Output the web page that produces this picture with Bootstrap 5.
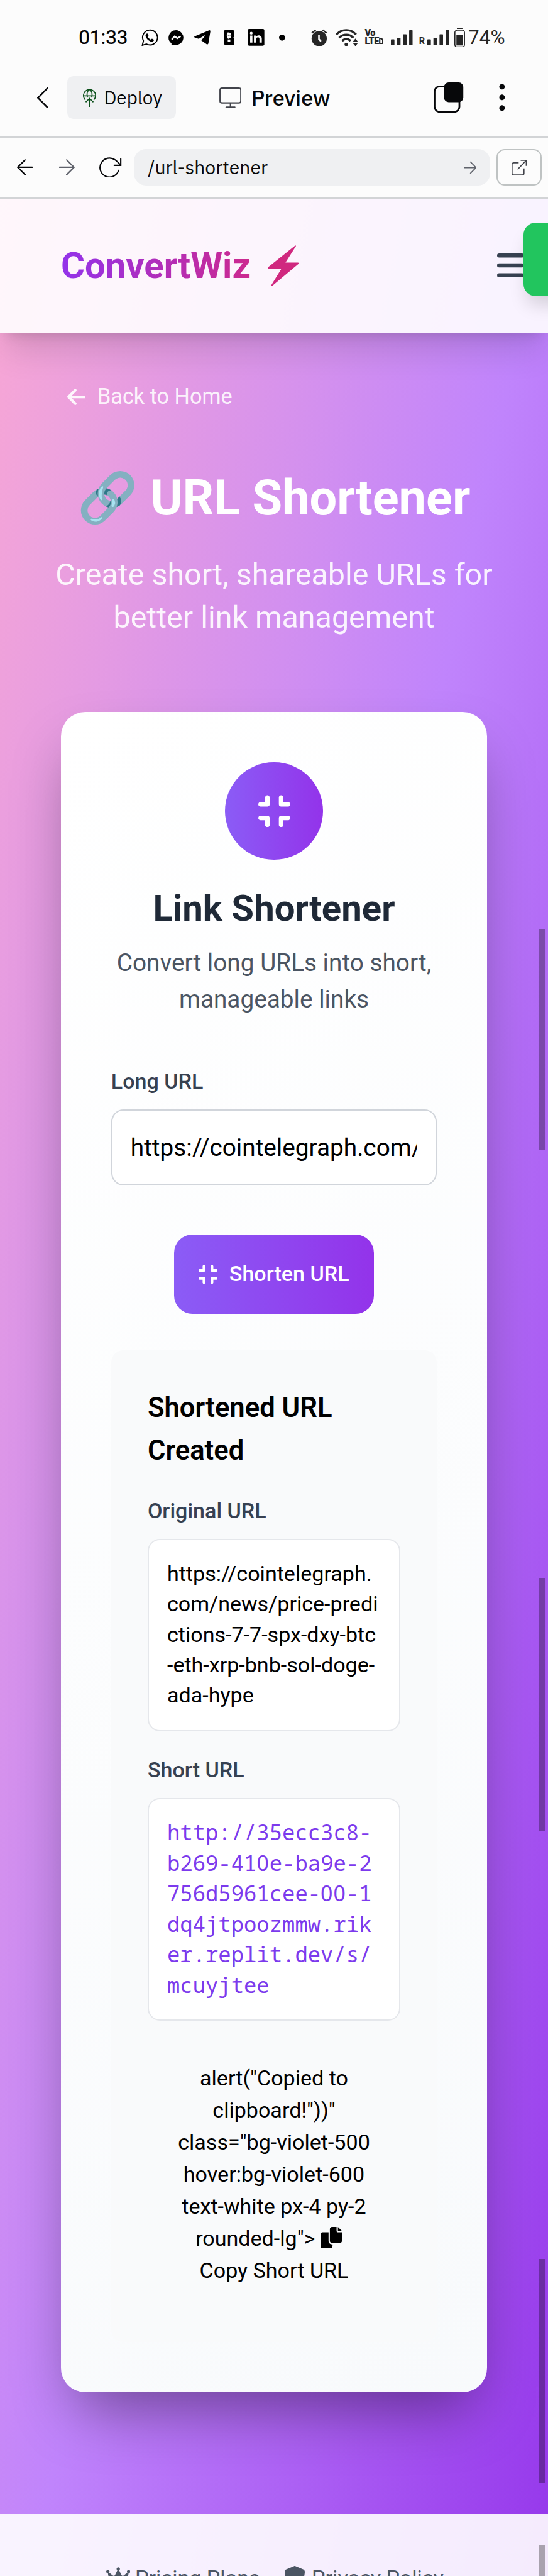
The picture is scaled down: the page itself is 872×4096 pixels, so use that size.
<!DOCTYPE html>
<html lang="en">
<head>
<meta charset="utf-8">
<meta name="viewport" content="width=device-width, initial-scale=1">
<title>ConvertWiz - URL Shortener</title>
<link rel="stylesheet" href="https://cdn.jsdelivr.net/npm/bootstrap@5.3.0/dist/css/bootstrap.min.css">
<style>
html{font-size:8.075px;overflow:hidden}
body{font-family:Roboto,sans-serif;font-size:4.22rem;line-height:6rem;color:#000;background:#fcfcfc;margin:0}
h1,h2,h3,p{margin:0}
svg{display:block;flex:none}
.screen{position:relative;width:100%;height:4096px;overflow:hidden}
/* phone status bar */
.statusbar{height:11.6rem;padding:3.2rem 0 0 15.5rem;font-size:3.9rem;font-weight:400;line-height:8.4rem}
.statusbar .right{color:#262626;font-weight:400;margin-left:5.1rem}
/* browser chrome */
.chrome{font-family:"IBM Plex Sans","Noto Sans",sans-serif;color:#07080a}
.toolbar{height:15.5rem;border-bottom:.3rem solid #d2d4d6;padding-left:7.3rem}
.deploy{width:21.5rem;height:8.4rem;margin-left:3.7rem;padding-left:3.2rem;border-radius:1.2rem;background:#eff0f2;font-size:3.67rem}
.previewtab{margin-left:8.5rem;font-size:4.25rem;font-weight:500}
.addressbar{height:12rem;border-bottom:.3rem solid #d2d4d6;padding:0 1.2rem 0 3.3rem}
.addr{height:7.2rem;margin-left:2.4rem;margin-right:1.2rem;padding:0 2.7rem;border-radius:2.4rem;background:#eff0f2;font-size:3.73rem}
.extbtn{width:9rem;height:7.2rem;border:.3rem solid #bfc3c3;border-radius:1.6rem}
/* site */
.site{background:linear-gradient(to bottom right,#f9a8d4,#c084fc,#9333ea) 0 0/100% 496.6rem no-repeat;height:468.3rem}
.sitehead{position:relative;height:26.4rem;padding:0 4.7rem 0 12rem;background:rgba(255,255,255,.9);box-shadow:0 4.8rem 6rem -1.2rem rgba(0,0,0,.12),0 1.9rem 2.4rem -1.4rem rgba(0,0,0,.14)}
.brand{font-size:7.2rem;font-weight:700;line-height:9.6rem;gap:3.4rem;background:linear-gradient(90deg,#9333ea,#db2777);-webkit-background-clip:text;background-clip:text;color:transparent}
.toastbox{position:absolute;right:-20rem;top:4.8rem;width:24.8rem;height:14.4rem;border-radius:2.4rem;background:#22c55e;box-shadow:0 2.4rem 3.6rem -.7rem rgba(0,0,0,.15)}
.hero{padding:9.6rem 4rem 0}
.backlink{margin-left:9.2rem;gap:2.3rem;font-size:4.24rem;line-height:6rem;color:rgba(255,255,255,.9);text-decoration:none}
.hero h1{height:12rem;margin-top:11rem;font-size:9.6rem;font-weight:700;line-height:12rem;color:#fff;white-space:nowrap}
.emoji{font-family:"Noto Color Emoji",sans-serif;font-weight:400}
.tagline{margin-top:4.85rem;font-size:6rem;line-height:8.4rem;color:rgba(255,255,255,.9);white-space:nowrap}
.panel{width:84rem;height:330.9rem;margin:14.45rem auto 0;padding:9.9rem;border-radius:4.8rem;background:linear-gradient(145deg,#fff,#f8fafc);box-shadow:0 6rem 12rem -2.9rem rgba(0,0,0,.4)}
.disc{width:19.2rem;height:19.2rem;background:linear-gradient(90deg,#8b5cf6,#9333ea);color:#fff}
.panel h2{margin-top:5.05rem;font-size:7.2rem;font-weight:700;line-height:9rem;color:#1f2937}
.panel .sub{margin-top:2.65rem;font-size:4.8rem;line-height:7.2rem;color:#4b5563;white-space:nowrap}
.flabel{display:block;font-weight:500;line-height:6rem;color:#374151}
.form-control.longurl{height:15rem;margin-top:2.6rem;padding:0 3.6rem;border:.3rem solid #d1d5db;border-radius:2.4rem;font-size:4.8rem;color:#000;background:#fff;text-overflow:clip}
.btn.shorten{width:39.4rem;height:15.6rem;margin-top:9.6rem;padding:0;border:0;border-radius:3.6rem;background:linear-gradient(90deg,#8b5cf6,#9333ea);font-size:4.22rem;font-weight:500;color:#fff;gap:2.3rem}
.result{height:195.3rem;margin-top:7.15rem;padding:7.25rem 7.2rem 0;border-radius:2.4rem;background:#f9fafb}
.result h3{font-size:5.4rem;font-weight:600;line-height:8.4rem}
.urlbox{margin-top:2.6rem;padding:3.5rem 3.6rem;border:.3rem solid #e5e7eb;border-radius:2.4rem;background:#fff;white-space:nowrap}
.long{height:37.8rem}
.shorturl{height:43.8rem;padding-top:3.5rem;font-family:"Noto Sans Mono","DejaVu Sans Mono",monospace;font-size:4.2rem;color:#7c3aed}
.zero{font-family:"Noto Sans",sans-serif;letter-spacing:.029em}
.copy{margin-top:8.2rem;line-height:6.32rem;white-space:nowrap}
.copy svg{display:inline-block;vertical-align:-.5rem;margin-right:2.1rem}
.sitefoot{height:12.1rem;margin-top:24rem;padding:9.3rem 0 0 .3rem;background:rgba(255,255,255,.9);color:#4b5563;gap:4.8rem}
/* overlay scrollbar thumbs */
.thumb{position:absolute;right:.6rem;width:1.2rem;background:rgba(0,0,0,.31)}
</style>
<script src="https://cdn.jsdelivr.net/npm/bootstrap@5.3.0/dist/js/bootstrap.bundle.min.js"></script>
</head>
<body>
<svg width="0" height="0" class="position-absolute"><defs>
<symbol id="compress" viewBox="0 32 448 448"><path fill="currentColor" d="M160 64c0-17.700-14.300-32-32-32s-32 14.300-32 32v64H32c-17.700 0-32 14.300-32 32s14.300 32 32 32h96c17.700 0 32-14.300 32-32V64zM32 320c-17.700 0-32 14.300-32 32s14.300 32 32 32h64v64c0 17.700 14.300 32 32 32s32-14.300 32-32v-96c0-17.700-14.300-32-32-32H32zM352 64c0-17.700-14.300-32-32-32s-32 14.300-32 32v96c0 17.700 14.300 32 32 32h96c17.700 0 32-14.300 32-32s-14.300-32-32-32h-64V64zM320 320c-17.700 0-32 14.300-32 32v96c0 17.700 14.300 32 32 32s32-14.300 32-32v-64h64c17.700 0 32-14.300 32-32s-14.300-32-32-32h-96z"/></symbol>
<symbol id="bars" viewBox="0 0 43 30"><path fill="currentColor" d="M0 19q0-1 1-1h5q1 0 1 1v10q0 1-1 1H1q-1 0-1-1zM12 16q0-1 1-1h5q1 0 1 1v13q0 1-1 1h-5q-1 0-1-1zM24 9q0-1 1-1h5q1 0 1 1v20q0 1-1 1h-5q-1 0-1-1zM36 1q0-1 1-1h5q1 0 1 1v28q0 1-1 1h-5q-1 0-1-1z"/></symbol>
</defs></svg>
<div class="screen">

<div class="statusbar d-flex align-items-center">
  <span style="width:12.4rem;-webkit-text-stroke:.03rem">01:33</span>
  <svg style="width:3.3rem;height:3.4rem" viewBox="0 0 33 34"><path d="M2 32l2-8.500a14.700 14.700 0 1 1 6 6.200z" fill="none" stroke="#000" stroke-width="2.400"/><path d="M9.500 10c2-2 3.500-1 4.500 3 .2 1-1 1.600-1.300 2.400 1.300 2.700 3.300 4.600 6 5.700 1-.6 1.600-2.300 2.800-1.700 4 1.700 4 2.200 2.500 4.200-3 3.500-9 .6-12.500-3.400-3.300-3.700-4.600-7.600-2-10.200z"/></svg>
  <svg style="width:3rem;height:3rem;margin-left:2rem" viewBox="0 0 30 30"><path d="M15 0a15 14.600 0 1 1-4 28.800L6 30v-4A15 14.600 0 0 1 15 0z"/><path d="M6.500 18.500l6-6.500 5 4 6.500-4" fill="none" stroke="#fcfcfc" stroke-width="3"/></svg>
  <svg style="width:3.2rem;height:2.8rem;margin-left:2.1rem" viewBox="0 0 32 28"><path d="M1 12L30 0q2 0 2 2l-4 24q-1 3-3.500 1.500L14 20l9-11L9 17l-8-2.500q-2-1.500 0-2.500z"/></svg>
  <svg style="width:2.1rem;height:3.1rem;margin-left:2.6rem" viewBox="0 0 21 31"><path d="M5 0h11q5 1 5 6v5q0 3-2 5 2 2 2 5v5q0 5-5 5H5q-5-1-5-6V6q0-5 5-6z"/><path d="M10.500 6q4.500 0 4.500 5.500T10.500 18 6 11.500 10.500 6zM8 19.500h5v5H8z" fill="#fcfcfc"/><circle cx="9" cy="11" r=".8"/><circle cx="12.500" cy="11" r=".8"/></svg>
  <svg style="width:3.3rem;height:3.3rem;margin-left:2.6rem" viewBox="0 0 33 33"><rect width="33" height="33" rx="3"/><path d="M5 13h4.500v14H5zM12.500 13H17v2c3-4 11-3 11 4v8h-4.700v-7.500c0-4-6-4-6 0V27h-4.800z" fill="#fcfcfc"/><circle cx="7.200" cy="8.300" r="2.700" fill="#fcfcfc"/></svg>
  <svg style="width:1.2rem;height:1.2rem;margin-left:2.9rem" viewBox="0 0 12 12"><circle cx="6" cy="6" r="6"/></svg>
  <div class="right d-flex align-items-center">
    <svg style="width:3.2rem;height:3.4rem" viewBox="0 0 32 34" fill="#262626"><circle cx="16" cy="19" r="15"/><path d="M1.500 8L9 2M30.500 8L23 2" stroke="#262626" stroke-width="3"/><path d="M15.500 12v8l4 4.500" stroke="#fcfcfc" stroke-width="3.200" fill="none"/></svg>
    <svg style="width:4.5rem;height:3.4rem;margin-left:1.6rem" viewBox="0 0 45 34"><g fill="none" stroke="#262626" stroke-width="4.200"><path d="M1.500 11c11-11.500 28-11.500 39 0M7 17.500c8-8 20-8 28 0M13 23.500c5-5 11.500-5 16.500 0"/></g><circle cx="21" cy="30.500" r="3.300" fill="#262626"/><path d="M34 25l5-6 5 6zM34 28h10l-5 6z" fill="#262626"/></svg>
    <div style="width:3.5rem;margin-left:1.3rem;font-size:1.8rem;line-height:1.5rem;font-weight:900;letter-spacing:-.05rem" class="text-nowrap">Vo<br>LTE<svg class="d-inline-block" style="width:.9rem;height:1.3rem;vertical-align:0" viewBox="0 0 9 13"><path d="M1.500 1.500H5l2.500 2.500v7.500h-6z" fill="none" stroke="#262626" stroke-width="2.600"/></svg></div>
    <svg style="width:4.3rem;height:3rem;margin-left:1.7rem"><use href="#bars"/></svg>
    <span style="font-size:1.8rem;font-weight:700;line-height:2rem;width:1.6rem;margin-left:1.2rem;padding-top:1.6rem">R</span>
    <svg style="width:4.3rem;height:3rem"><use href="#bars"/></svg>
    <svg style="width:2.1rem;height:3.9rem;margin-left:1.1rem" viewBox="0 0 21 39"><path fill="#262626" d="M5 0h11v2.500H5zM4 15h13v20H4z"/><rect x="1" y="5" width="19" height="33" rx="4.500" fill="none" stroke="#262626" stroke-width="2"/></svg>
    <span style="margin-left:.6rem">74%</span>
  </div>
</div>

<div class="chrome">
  <nav class="toolbar d-flex align-items-center">
    <svg style="width:2.2rem;height:4.1rem" viewBox="0 0 22 41"><path d="M20.500 1.500L1.800 20.500 20.500 39.500" fill="none" stroke="#07080a" stroke-width="3.200" stroke-linecap="round"/></svg>
    <div class="deploy d-flex align-items-center"><svg style="width:2.6rem;height:3.6rem" viewBox="0 0 26 36"><path d="M4.500 22A12 12 0 1 1 21.500 22M1 14h24M9 17.500C7 10 9 4 13 1.500 17 4 19 10 17 17.500M13 36V19M5.500 26.500L13 19l7.500 7.500" fill="none" stroke="#0a4f19" stroke-width="2.100"/></svg><span style="margin-left:1.5rem">Deploy</span></div>
    <div class="previewtab d-flex align-items-center"><svg style="width:4.4rem;height:4.1rem" viewBox="0 0 44 41"><path d="M5 1.500h34q3.500 0 3.500 3.500v22q0 3.500-3.500 3.500H5q-3.500 0-3.500-3.500V5q0-3.500 3.500-3.500zM22 31v8M13.500 39h17" fill="none" stroke="#42444b" stroke-width="2.800" stroke-linecap="round"/></svg><span style="margin-left:1.9rem">Preview</span></div>
    <div class="ms-auto d-flex align-items-center" style="padding-right:8.4rem">
      <svg style="width:5.9rem;height:6rem" viewBox="0 0 59 60"><rect x="1.800" y="8" width="49" height="50" rx="10" fill="none" stroke="#07080a" stroke-width="3.500"/><rect x="20.500" y="0" width="38" height="39" rx="9" fill="#07080a"/></svg>
      <svg style="width:1.2rem;height:5.4rem;margin-left:7rem" viewBox="0 0 12 54" fill="#07080a"><circle cx="6" cy="6" r="5.500"/><circle cx="6" cy="27" r="5.500"/><circle cx="6" cy="48" r="5.500"/></svg>
    </div>
  </nav>
  <div class="addressbar d-flex align-items-center">
    <svg style="width:3.1rem;height:3.2rem" viewBox="0 0 31 32"><path d="M16 1.500L1.500 16 16 30.500M1.500 16H30" fill="none" stroke="#07080a" stroke-width="2.700" stroke-linecap="round"/></svg>
    <svg style="width:3.1rem;height:3.2rem;margin-left:5.3rem" viewBox="0 0 31 32"><path d="M15 1.500L29.500 16 15 30.500M29.500 16H1" fill="none" stroke="#5f626b" stroke-width="2.700" stroke-linecap="round"/></svg>
    <svg style="width:4.4rem;height:4rem;margin-left:4.8rem" viewBox="0 0 44 40"><path d="M38 26A18.700 18.700 0 1 1 31.500 5.500Q36 8.500 42 15.500M42.300 3v13H29.500" fill="none" stroke="#07080a" stroke-width="2.700" stroke-linecap="round"/></svg>
    <div class="addr flex-grow-1 d-flex align-items-center justify-content-between"><span>/url-shortener</span><svg style="width:2.4rem;height:2.6rem" viewBox="0 0 24 26"><path d="M11.500 1.500L23 13 11.500 24.500M23 13H0" fill="none" stroke="#5f626b" stroke-width="2.200"/></svg></div>
    <div class="extbtn d-flex align-items-center justify-content-center"><svg style="width:3rem;height:3.1rem" viewBox="0 0 30 31"><path d="M14 6H4.500Q1 6 1 9.500v17Q1 30 4.500 30H21q3.500 0 3.500-3.500V17M18 1h11v11M29 1L12 19" fill="none" stroke="#42444b" stroke-width="2.100"/></svg></div>
  </div>
</div>

<div class="site">
  <header class="sitehead d-flex align-items-center justify-content-between">
    <div class="brand d-flex align-items-center">ConvertWiz<svg style="width:6.1rem;height:8.1rem" viewBox="0 0 61 81"><path d="M54 .5q2-.5 1.500 1.500L35 34h25q1.500 1.500 0 3L9 80q-2.500 1-2-1.500L27 46H1q-2-1.500 0-3z" fill="#d0287f"/></svg></div>
    <svg style="width:5.3rem;height:4.7rem" viewBox="0 0 53 47" fill="#374151"><rect width="53" height="8" rx="4"/><rect y="19.500" width="53" height="8" rx="4"/><rect y="39" width="53" height="8" rx="4"/></svg>
    <div class="toastbox"></div>
  </header>

  <main class="hero">
    <a href="#" class="backlink d-flex align-items-center"><svg style="width:3.7rem;height:4.23rem" viewBox="0 0 448 512"><path fill="currentColor" d="M9.400 233.400c-12.500 12.500-12.500 32.800 0 45.300l160 160c12.500 12.500 32.800 12.500 45.300 0s12.500-32.800 0-45.300L109.200 288 416 288c17.700 0 32-14.300 32-32s-14.300-32-32-32l-306.700 0L214.600 118.600c12.500-12.500 12.500-32.800 0-45.300s-32.800-12.500-45.300 0l-160 160z"/></svg>Back to Home</a>
    <h1 class="text-center"><span class="emoji">🔗</span> URL Shortener</h1>
    <p class="tagline text-center">Create short, shareable URLs for<br>better link management</p>

    <section class="panel">
      <div class="disc rounded-circle d-flex align-items-center justify-content-center mx-auto"><svg style="width:6.3rem;height:6.4rem"><use href="#compress"/></svg></div>
      <h2 class="text-center">Link Shortener</h2>
      <p class="sub text-center">Convert long URLs into short,<br>manageable links</p>
      <label class="flabel" style="margin-top:9.5rem" for="long">Long URL</label>
      <input id="long" class="form-control longurl" type="text" value="https://cointelegraph.com/news/price-predictions-7-7-spx-dxy-btc-eth-xrp-bnb-sol-doge-ada-hype">
      <button class="btn shorten d-flex align-items-center justify-content-center mx-auto"><svg style="width:3.7rem;height:3.8rem"><use href="#compress"/></svg>Shorten URL</button>
      <div class="result">
        <h3>Shortened URL<br>Created</h3>
        <span class="flabel" style="margin-top:4.6rem">Original URL</span>
        <div class="urlbox long">https://cointelegraph.<br>com/news/price-predi<br>ctions-7-7-spx-dxy-btc<br>-eth-xrp-bnb-sol-doge-<br>ada-hype</div>
        <span class="flabel" style="margin-top:4.6rem">Short URL</span>
        <div class="urlbox shorturl">http://35ecc3c8-<br>b269-41<span class="zero">0</span>e-ba9e-2<br>756d5961cee-<span class="zero">00</span>-1<br>dq4jtpoozmmw.rik<br>er.replit.dev/s/<br>mcuyjtee</div>
        <p class="copy text-center">alert("Copied to<br>clipboard!"))"<br>class="bg-violet-500<br>hover:bg-violet-600<br>text-white px-4 py-2<br>rounded-lg"&gt; <svg style="width:4.22rem;height:4.22rem" viewBox="0 0 512 512"><path d="M48 128h144v208c0 44 36 80 80 80h16v48c0 26-21 48-48 48H48c-26 0-48-22-48-48V176c0-27 21-48 48-48zM272 0h112v96c0 18 14 32 32 32h96v208c0 26-22 48-48 48H272c-26 0-48-22-48-48V48c0-26 22-48 48-48zM416 0l96 96h-96z"/></svg><br>Copy Short URL</p>
      </div>
    </section>
  </main>

  <footer class="sitefoot d-flex justify-content-center">
    <span class="d-flex align-items-center" style="height:6.6rem;gap:1rem"><svg style="width:4.75rem;height:4.22rem;margin-top:-.6rem" viewBox="0 0 576 512"><path fill="currentColor" d="M309 106c11.400-7 19-19.700 19-34c0-22.100-17.900-40-40-40s-40 17.900-40 40c0 14.400 7.600 27 19 34L209.700 220.600c-9.100 18.200-32.700 23.400-48.600 10.700L72 160c5-6.700 8-15 8-24c0-22.100-17.900-40-40-40S0 113.900 0 136s17.900 40 40 40c.2 0 .5 0 .7 0L86.400 427.400c5.500 30.400 32 52.600 63 52.600H426.600c30.900 0 57.400-22.100 63-52.600L535.300 176c.2 0 .5 0 .7 0c22.100 0 40-17.900 40-40s-17.900-40-40-40s-40 17.900-40 40c0 9 3 17.300 8 24l-89.100 71.300c-15.900 12.700-39.500 7.500-48.600-10.700L309 106z"/></svg>Pricing Plans</span>
    <span class="d-flex align-items-center" style="height:6.6rem;gap:1.2rem"><svg style="width:4.22rem;height:4.22rem;margin-top:-.6rem" viewBox="0 0 512 512"><path fill="currentColor" d="M256 0c4.600 0 9.200 1 13.400 2.900L457.700 82.800c22 9.300 38.400 31 38.300 57.200c-.5 99.200-41.300 280.700-213.600 363.200c-16.700 8-36.100 8-52.800 0C57.300 420.700 16.500 239.200 16 140c-.1-26.200 16.300-47.900 38.300-57.200L242.700 2.900C246.800 1 251.400 0 256 0z"/></svg>Privacy Policy</span>
  </footer>
</div>

<div class="thumb" style="top:182.9rem;height:43.5rem"></div>
<div class="thumb" style="top:310.7rem;height:49.9rem"></div>
<div class="thumb" style="top:444.8rem;height:44.1rem"></div>
<div class="thumb" style="top:501rem;height:6.3rem"></div>
</div>
</body>
</html>
